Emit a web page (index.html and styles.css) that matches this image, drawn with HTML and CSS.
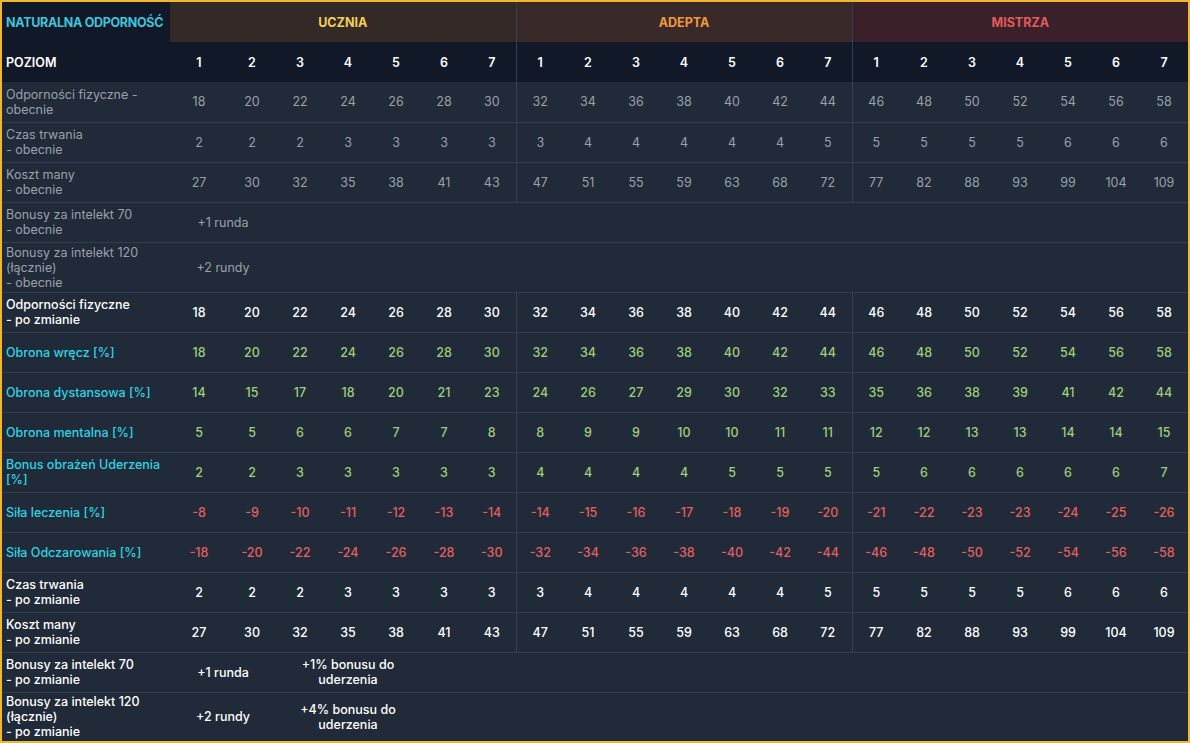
FILE: index.html
```html
<!DOCTYPE html>
<html lang="pl">
<head>
<meta charset="utf-8">
<title>Naturalna odporność</title>
<link rel="stylesheet" href="styles.css">
</head>
<body>
<div class="frame">
<table class="skill">
<colgroup>
<col class="c-label"><col class="c-first">
<col><col><col><col><col><col>
<col><col><col><col><col><col><col>
<col><col><col><col><col><col><col>
</colgroup>
<thead>
<tr class="tier">
<th class="title">NATURALNA ODPORNOŚĆ</th>
<th colspan="7" class="t-uczen">UCZNIA</th>
<th colspan="7" class="t-adept g">ADEPTA</th>
<th colspan="7" class="t-mistrz g">MISTRZA</th>
</tr>
<tr class="levels">
<th class="label">POZIOM</th>
<th>1</th><th>2</th><th>3</th><th>4</th><th>5</th><th>6</th><th>7</th>
<th class="g">1</th><th>2</th><th>3</th><th>4</th><th>5</th><th>6</th><th>7</th>
<th class="g">1</th><th>2</th><th>3</th><th>4</th><th>5</th><th>6</th><th>7</th>
</tr>
</thead>
<tbody>
<tr class="cur">
<td class="label">Odporności fizyczne -<br>obecnie</td>
<td>18</td><td>20</td><td>22</td><td>24</td><td>26</td><td>28</td><td>30</td>
<td class="g">32</td><td>34</td><td>36</td><td>38</td><td>40</td><td>42</td><td>44</td>
<td class="g">46</td><td>48</td><td>50</td><td>52</td><td>54</td><td>56</td><td>58</td>
</tr>
<tr class="cur">
<td class="label">Czas trwania<br>- obecnie</td>
<td>2</td><td>2</td><td>2</td><td>3</td><td>3</td><td>3</td><td>3</td>
<td class="g">3</td><td>4</td><td>4</td><td>4</td><td>4</td><td>4</td><td>5</td>
<td class="g">5</td><td>5</td><td>5</td><td>5</td><td>6</td><td>6</td><td>6</td>
</tr>
<tr class="cur">
<td class="label">Koszt many<br>- obecnie</td>
<td>27</td><td>30</td><td>32</td><td>35</td><td>38</td><td>41</td><td>43</td>
<td class="g">47</td><td>51</td><td>55</td><td>59</td><td>63</td><td>68</td><td>72</td>
<td class="g">77</td><td>82</td><td>88</td><td>93</td><td>99</td><td>104</td><td>109</td>
</tr>
<tr class="cur">
<td class="label">Bonusy za intelekt 70<br>- obecnie</td>
<td colspan="2">+1 runda</td>
<td colspan="19"></td>
</tr>
<tr class="cur tall">
<td class="label">Bonusy za intelekt 120<br>(łącznie)<br>- obecnie</td>
<td colspan="2">+2 rundy</td>
<td colspan="19"></td>
</tr>
<tr class="new">
<td class="label">Odporności fizyczne<br>- po zmianie</td>
<td>18</td><td>20</td><td>22</td><td>24</td><td>26</td><td>28</td><td>30</td>
<td class="g">32</td><td>34</td><td>36</td><td>38</td><td>40</td><td>42</td><td>44</td>
<td class="g">46</td><td>48</td><td>50</td><td>52</td><td>54</td><td>56</td><td>58</td>
</tr>
<tr class="stat pos">
<td class="label">Obrona wręcz [%]</td>
<td>18</td><td>20</td><td>22</td><td>24</td><td>26</td><td>28</td><td>30</td>
<td class="g">32</td><td>34</td><td>36</td><td>38</td><td>40</td><td>42</td><td>44</td>
<td class="g">46</td><td>48</td><td>50</td><td>52</td><td>54</td><td>56</td><td>58</td>
</tr>
<tr class="stat pos">
<td class="label">Obrona dystansowa [%]</td>
<td>14</td><td>15</td><td>17</td><td>18</td><td>20</td><td>21</td><td>23</td>
<td class="g">24</td><td>26</td><td>27</td><td>29</td><td>30</td><td>32</td><td>33</td>
<td class="g">35</td><td>36</td><td>38</td><td>39</td><td>41</td><td>42</td><td>44</td>
</tr>
<tr class="stat pos">
<td class="label">Obrona mentalna [%]</td>
<td>5</td><td>5</td><td>6</td><td>6</td><td>7</td><td>7</td><td>8</td>
<td class="g">8</td><td>9</td><td>9</td><td>10</td><td>10</td><td>11</td><td>11</td>
<td class="g">12</td><td>12</td><td>13</td><td>13</td><td>14</td><td>14</td><td>15</td>
</tr>
<tr class="stat pos">
<td class="label">Bonus obrażeń Uderzenia<br>[%]</td>
<td>2</td><td>2</td><td>3</td><td>3</td><td>3</td><td>3</td><td>3</td>
<td class="g">4</td><td>4</td><td>4</td><td>4</td><td>5</td><td>5</td><td>5</td>
<td class="g">5</td><td>6</td><td>6</td><td>6</td><td>6</td><td>6</td><td>7</td>
</tr>
<tr class="stat neg">
<td class="label">Siła leczenia [%]</td>
<td>-8</td><td>-9</td><td>-10</td><td>-11</td><td>-12</td><td>-13</td><td>-14</td>
<td class="g">-14</td><td>-15</td><td>-16</td><td>-17</td><td>-18</td><td>-19</td><td>-20</td>
<td class="g">-21</td><td>-22</td><td>-23</td><td>-23</td><td>-24</td><td>-25</td><td>-26</td>
</tr>
<tr class="stat neg">
<td class="label">Siła Odczarowania [%]</td>
<td>-18</td><td>-20</td><td>-22</td><td>-24</td><td>-26</td><td>-28</td><td>-30</td>
<td class="g">-32</td><td>-34</td><td>-36</td><td>-38</td><td>-40</td><td>-42</td><td>-44</td>
<td class="g">-46</td><td>-48</td><td>-50</td><td>-52</td><td>-54</td><td>-56</td><td>-58</td>
</tr>
<tr class="new">
<td class="label">Czas trwania<br>- po zmianie</td>
<td>2</td><td>2</td><td>2</td><td>3</td><td>3</td><td>3</td><td>3</td>
<td class="g">3</td><td>4</td><td>4</td><td>4</td><td>4</td><td>4</td><td>5</td>
<td class="g">5</td><td>5</td><td>5</td><td>5</td><td>6</td><td>6</td><td>6</td>
</tr>
<tr class="new">
<td class="label">Koszt many<br>- po zmianie</td>
<td>27</td><td>30</td><td>32</td><td>35</td><td>38</td><td>41</td><td>43</td>
<td class="g">47</td><td>51</td><td>55</td><td>59</td><td>63</td><td>68</td><td>72</td>
<td class="g">77</td><td>82</td><td>88</td><td>93</td><td>99</td><td>104</td><td>109</td>
</tr>
<tr class="new">
<td class="label">Bonusy za intelekt 70<br>- po zmianie</td>
<td colspan="2">+1 runda</td>
<td colspan="3" class="nw">+1% bonusu do<br>uderzenia</td>
<td colspan="16"></td>
</tr>
<tr class="new tall last">
<td class="label">Bonusy za intelekt 120<br>(łącznie)<br>- po zmianie</td>
<td colspan="2">+2 rundy</td>
<td colspan="3" class="nw">+4% bonusu do<br>uderzenia</td>
<td colspan="16"></td>
</tr>
</tbody>
</table>
</div>
</body>
</html>
```
FILE: styles.css
```css
html, body {
  margin: 0;
  padding: 0;
  background: #1f2937;
}

.frame {
  box-sizing: border-box;
  width: 1190px;
  height: 743px;
  border: 2px solid #f3b72c;
  background: #202a38;
  overflow: hidden;
}

.skill {
  width: 1186px;
  table-layout: fixed;
  border-collapse: collapse;
  font-family: Inter, "Noto Sans", sans-serif;
  font-size: 12.5px;
  line-height: 15px;
  color: #9ca3af;
}

.c-label { width: 168px; }
.c-first { width: 58px; }

.skill th,
.skill td {
  height: 40px;
  padding: 0;
  text-align: center;
  vertical-align: middle;
  box-sizing: border-box;
}

.skill tbody td {
  border-top: 1px solid #323e50;
}

.skill tbody tr:first-child td {
  border-top: none;
}

.skill .g {
  border-left: 1px solid #334155;
}

.skill .label {
  text-align: left;
  padding-left: 4px;
  padding-right: 4px;
}

.skill .nw {
  white-space: nowrap;
}

/* tier header row */
.tier th {
  font-weight: 700;
  font-size: 12.5px;
}

.tier .title {
  background: #111827;
  color: #3fc4da;
  text-align: left;
  padding-left: 4px;
  padding-right: 0;
  letter-spacing: -0.3px;
  white-space: nowrap;
}

.t-uczen {
  background: #332a27;
  color: #f4cf5b;
}

.t-adept {
  background: #392928;
  color: #f09a3e;
}

.t-mistrz {
  background: #3a2029;
  color: #e35b5b;
}

/* level numbers row */
.levels th {
  background: #111827;
  color: #ffffff;
  font-weight: 600;
}

/* body rows */
.cur td {
  color: #9aa1ab;
  font-weight: 400;
}

.new td {
  color: #ffffff;
  font-weight: 500;
}

.tall td {
  height: 50px;
}

.last td {
  height: 49px;
}

.stat td {
  font-weight: 500;
}

.pos td {
  color: #9dcf79;
}

.neg td {
  color: #e35f5f;
}

.stat.pos .label,
.stat.neg .label {
  color: #2dd4e6;
}
```
